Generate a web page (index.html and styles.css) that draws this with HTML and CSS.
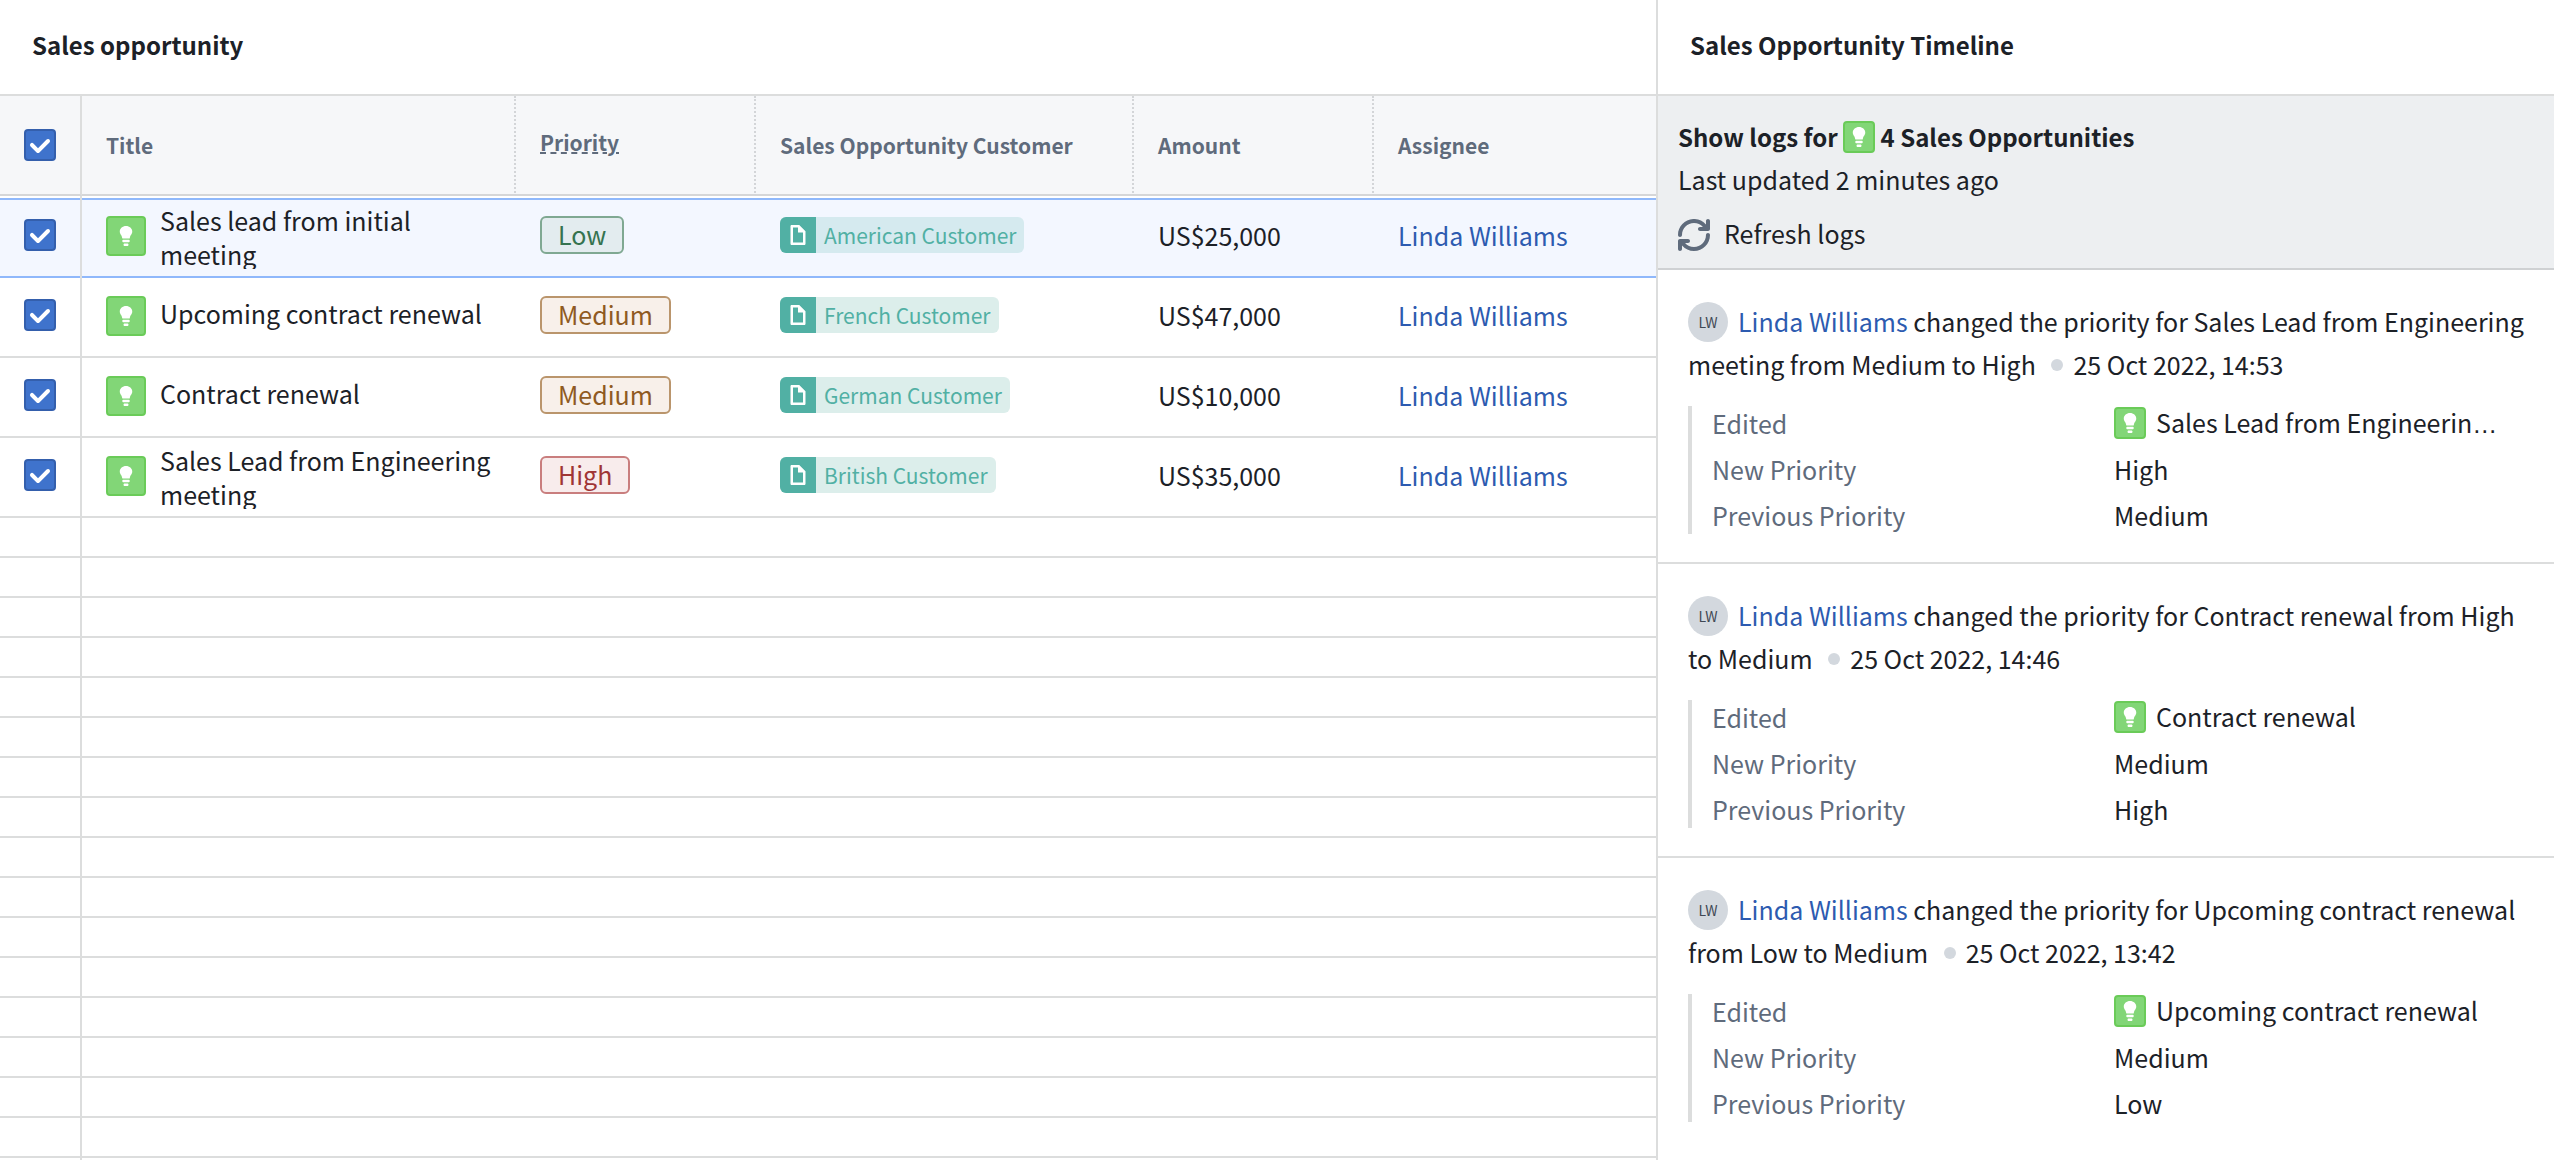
FILE: index.html
```html
<!DOCTYPE html>
<html lang="en">
<head>
    <meta charset="UTF-8">
    <meta name="viewport" content="width=device-width, initial-scale=1">
    <title>Sales opportunity</title>
    <link rel="stylesheet" href="styles.css">
</head>
<body>
<!-- shared icons -->
<svg width="0" height="0" class="sprite" aria-hidden="true">
    <symbol id="bulb" viewBox="0 0 16 16">
        <path d="M9.01 14h-2c-.55 0-1 .45-1 1s.45 1 1 1h2c.55 0 1-.45 1-1s-.44-1-1-1zm1-3h-4c-.55 0-1 .45-1 1s.45 1 1 1h4c.55 0 1-.45 1-1s-.44-1-1-1zm-2-11C5.26 0 3.03 1.95 3.03 4.35c0 2.37 1.63 2.64 1.94 5.22 0 .24.22.44.5.44h5.09c.28 0 .5-.19.5-.44C11.37 6.99 13 6.72 13 4.35 13 1.95 10.77 0 8.01 0z"/>
    </symbol>
    <symbol id="doc" viewBox="0 0 16 16">
        <path fill-rule="evenodd" d="M9 0H3c-.55 0-1 .45-1 1v14c0 .55.45 1 1 1h10c.55 0 1-.45 1-1V5L9 0zm3 14H4V2h4v4h4v8z"/>
    </symbol>
    <symbol id="refresh" viewBox="0 0 16 16">
        <path d="M14.99 6.99c-.55 0-1 .45-1 1 0 3.31-2.69 6-6 6-1.77 0-3.36-.78-4.46-2H5c.55 0 1-.45 1-1s-.45-1-1-1H1c-.55 0-1 .45-1 1v4c0 .55.45 1 1 1s1-.45 1-1v-1.74a7.95 7.95 0 006 2.74c4.42 0 8-3.58 8-8 0-.55-.45-1-1.01-1zM15 0c-.55 0-1 .45-1 1v1.74A7.95 7.95 0 008-.01C3.58-.01 0 3.57 0 7.99c0 .55.45 1 1 1s1-.45 1-1c0-3.31 2.69-6 6-6 1.77 0 3.36.78 4.46 2H11c-.55 0-1 .45-1 1s.45 1 1 1h4c.55 0 1-.45 1-1V1c0-.55-.45-1-1-1z"/>
    </symbol>
</svg>
<div class="layout">
    <main class="panel">
        <h2 class="panel-title">Sales opportunity</h2>
        <table class="grid">
            <colgroup>
                <col class="col-check"><col class="col-title"><col class="col-priority"><col class="col-customer"><col class="col-amount"><col>
            </colgroup>
            <thead>
                <tr>
                    <th class="check"><input type="checkbox" aria-label="Select all" checked></th>
                    <th>Title</th>
                    <th><span class="hint">Priority</span></th>
                    <th>Sales Opportunity Customer</th>
                    <th>Amount</th>
                    <th>Assignee</th>
                </tr>
            </thead>
            <tbody>
                <tr class="active">
                    <td class="check"><input type="checkbox" aria-label="Select Sales lead from initial meeting" checked></td>
                    <td><div class="title"><span class="bulb"><svg><use href="#bulb"/></svg></span><span class="title-text">Sales lead from initial meeting</span></div></td>
                    <td><span class="badge low">Low</span></td>
                    <td><span class="tag"><span class="tag-icon"><svg><use href="#doc"/></svg></span><span class="tag-text">American Customer</span></span></td>
                    <td>US$25,000</td>
                    <td><a href="#">Linda Williams</a></td>
                </tr>
                <tr>
                    <td class="check"><input type="checkbox" aria-label="Select Upcoming contract renewal" checked></td>
                    <td><div class="title"><span class="bulb"><svg><use href="#bulb"/></svg></span><span class="title-text">Upcoming contract renewal</span></div></td>
                    <td><span class="badge medium">Medium</span></td>
                    <td><span class="tag"><span class="tag-icon"><svg><use href="#doc"/></svg></span><span class="tag-text">French Customer</span></span></td>
                    <td>US$47,000</td>
                    <td><a href="#">Linda Williams</a></td>
                </tr>
                <tr>
                    <td class="check"><input type="checkbox" aria-label="Select Contract renewal" checked></td>
                    <td><div class="title"><span class="bulb"><svg><use href="#bulb"/></svg></span><span class="title-text">Contract renewal</span></div></td>
                    <td><span class="badge medium">Medium</span></td>
                    <td><span class="tag"><span class="tag-icon"><svg><use href="#doc"/></svg></span><span class="tag-text">German Customer</span></span></td>
                    <td>US$10,000</td>
                    <td><a href="#">Linda Williams</a></td>
                </tr>
                <tr>
                    <td class="check"><input type="checkbox" aria-label="Select Sales Lead from Engineering meeting" checked></td>
                    <td><div class="title"><span class="bulb"><svg><use href="#bulb"/></svg></span><span class="title-text">Sales Lead from Engineering meeting</span></div></td>
                    <td><span class="badge high">High</span></td>
                    <td><span class="tag"><span class="tag-icon"><svg><use href="#doc"/></svg></span><span class="tag-text">British Customer</span></span></td>
                    <td>US$35,000</td>
                    <td><a href="#">Linda Williams</a></td>
                </tr>
            </tbody>
        </table>
        <div class="empty-rows"></div>
    </main>

    <aside class="panel timeline">
        <h2 class="panel-title">Sales Opportunity Timeline</h2>
        <div class="summary">
            <p class="summary-title">Show logs for <span class="bulb small"><svg><use href="#bulb"/></svg></span> 4 Sales Opportunities</p>
            <p>Last updated 2 minutes ago</p>
            <button type="button" class="refresh"><svg><use href="#refresh"/></svg><span>Refresh logs</span></button>
        </div>
        <article class="entry">
            <p class="entry-text"><span class="avatar">LW</span><a href="#">Linda Williams</a> changed the priority for Sales Lead from Engineering meeting from Medium to High <span class="dot"></span>25 Oct 2022, 14:53</p>
            <dl class="details">
                <dt>Edited</dt>
                <dd class="object"><span class="bulb small"><svg><use href="#bulb"/></svg></span><span class="object-name"><span>Sales Lead from Engineering meeting</span></span></dd>
                <dt>New Priority</dt>
                <dd>High</dd>
                <dt>Previous Priority</dt>
                <dd>Medium</dd>
            </dl>
        </article>
        <article class="entry">
            <p class="entry-text"><span class="avatar">LW</span><a href="#">Linda Williams</a> changed the priority for Contract renewal from High to Medium <span class="dot"></span>25 Oct 2022, 14:46</p>
            <dl class="details">
                <dt>Edited</dt>
                <dd class="object"><span class="bulb small"><svg><use href="#bulb"/></svg></span><span class="object-name"><span>Contract renewal</span></span></dd>
                <dt>New Priority</dt>
                <dd>Medium</dd>
                <dt>Previous Priority</dt>
                <dd>High</dd>
            </dl>
        </article>
        <article class="entry">
            <p class="entry-text"><span class="avatar">LW</span><a href="#">Linda Williams</a> changed the priority for Upcoming contract renewal from Low to Medium <span class="dot"></span>25 Oct 2022, 13:42</p>
            <dl class="details">
                <dt>Edited</dt>
                <dd class="object"><span class="bulb small"><svg><use href="#bulb"/></svg></span><span class="object-name"><span>Upcoming contract renewal</span></span></dd>
                <dt>New Priority</dt>
                <dd>Medium</dd>
                <dt>Previous Priority</dt>
                <dd>Low</dd>
            </dl>
        </article>
    </aside>
</div>
</body>
</html>
```

FILE: styles.css
```css
*{box-sizing: border-box;margin: 0;padding: 0;}
body, .object-name span{font: 25px/34px "Noto Sans CJK SC", "Noto Sans CJK JP", "Open Sans", sans-serif;}
body{color: #1c2127;background: #fff;}
a{color: #2d5bb0;text-decoration: none;}
a:hover{text-decoration: underline;}
svg{display: block;fill: currentColor;}
.sprite{position: absolute;}

.layout{display: grid;grid-template-columns: 1656fr 898fr;height: 100vh;overflow: hidden;}
.panel{display: flex;flex-direction: column;min-width: 0;}
.panel-title{font-size: 24px;line-height: 34px;font-weight: 700;padding: 28px 32px 32px;border-bottom: 2px solid #dcdddd;}
.timeline{border-left: 2px solid #dcdddd;}

/* table */
.grid{width: 100%;table-layout: fixed;border-collapse: separate;border-spacing: 0;}
.col-check{width: 82px;}
.col-title{width: 434px;}
.col-priority{width: 240px;}
.col-customer{width: 378px;}
.col-amount{width: 240px;}
.grid th{height: 100px;padding: 0 24px;text-align: left;font-size: 21px;font-weight: 700;color: #5f6b7c;background: #f6f7f9;border-bottom: 2px solid #d5d6d8;border-right: 2px dotted #d3d5d8;}
.grid th:last-child{border-right: 0;}
.grid td{height: 80px;padding: 0 24px 6px;box-shadow: inset 0 -2px #dcdddd;}
.grid td:nth-child(2){padding-bottom: 4px;}
.grid .check{padding-left: 24px;padding-right: 0;border-right: 2px solid #dcdddd;}
.grid .active td{height: 82px;padding-top: 2px;background: #f3f7ff;box-shadow: inset 0 2px #fff, inset 0 4px #8fb8fb, inset 0 -2px #8fb8fb;}
.hint{display: inline-block;padding-bottom: 6px;text-decoration: underline dashed 2px;}
.empty-rows{flex: 1;background: linear-gradient(#dcdddd, #dcdddd) 80px 0 / 2px 100% no-repeat, repeating-linear-gradient(transparent 0 38px, #dcdddd 38px 40px);}

input[type="checkbox"]{appearance: none;display: block;width: 32px;height: 32px;border-radius: 4px;background: #3f73cc url("data:image/svg+xml,%3Csvg xmlns='http://www.w3.org/2000/svg' viewBox='0 0 16 16'%3E%3Cpath fill='%23fff' d='M12 5c-.28 0-.53.11-.71.29L7 9.59l-2.29-2.3a1.003 1.003 0 00-1.42 1.42l3 3c.18.18.43.29.71.29s.53-.11.71-.29l5-5A1.003 1.003 0 0012 5z'/%3E%3C/svg%3E") center / 32px 32px;box-shadow: inset 0 0 0 2px #345fac;}

.title{display: flex;align-items: center;gap: 14px;}
.title-text{max-height: 66px;padding-bottom: 6px;overflow: hidden;}
.bulb{display: inline-flex;flex: none;align-items: center;justify-content: center;width: 40px;height: 40px;border: 2px solid #6acb58;border-radius: 4px;background: #82d677;color: #fff;}
.bulb svg, .tag-icon svg{width: 20px;height: 20px;}
.bulb.small{width: 32px;height: 32px;}

.badge{display: block;width: fit-content;height: 38px;padding: 0 16px;border: 2px solid;border-radius: 6px;line-height: 32px;}
.low{color: #35734f;background: #e3ecef;border-color: #7fa892;}
.medium{color: #8f5a22;background: #f8f0ea;border-color: #ba956c;}
.high{color: #a03535;background: #f8ecec;border-color: #c97e7e;}
.tag{display: flex;width: fit-content;height: 36px;border-radius: 6px;overflow: hidden;background: #dceeeb;color: #51b0a4;font-size: 21px;line-height: 36px;}
.active .tag{background: #d5eaef;}
.tag-icon{display: flex;align-items: center;justify-content: center;width: 36px;background: #51b0a4;color: #fff;}
.tag-text{padding: 0 8px;}

/* timeline */
.summary{padding: 20px 20px 14px;background: #edeff1;border-bottom: 2px solid #cfd1d3;line-height: 42px;}
.summary-title{font-size: 24px;font-weight: 700;}
.refresh{display: flex;align-items: center;gap: 14px;margin-top: 16px;border: 0;background: none;font: inherit;line-height: 34px;color: inherit;cursor: pointer;}
.refresh svg{width: 32px;height: 32px;color: #5f6b7c;}
.refresh span{padding-bottom: 4px;}
.entry{padding: 30px 20px 28px 30px;border-bottom: 2px solid #dcdddd;}
.entry:last-child{border-bottom: 0;}
.entry-text{line-height: 43px;}
.avatar{display: inline-block;width: 40px;height: 40px;margin-right: 10px;border-radius: 50%;overflow: hidden;background: #d3d8de;color: #404854;font-size: 14px;line-height: 40px;text-align: center;vertical-align: -10px;}
.dot{display: inline-block;width: 12px;height: 12px;margin: 0 10px;border-radius: 50%;background: #d3d8de;vertical-align: 4px;}
.details{display: grid;grid-template-columns: 1fr 1fr;row-gap: 12px;margin: 20px 18px 0 0;padding: 0 0 2px 20px;border-left: 4px solid #dcdddd;line-height: 34px;}
.details dt{color: #5f6b7c;}
.object{display: flex;align-items: center;gap: 10px;height: 34px;min-width: 0;padding-right: 14px;}
/* the CJK ellipsis is centred, so the box itself uses a latin font */
.object-name{overflow: hidden;font-family: "Liberation Sans", sans-serif;white-space: nowrap;text-overflow: ellipsis;}
```
